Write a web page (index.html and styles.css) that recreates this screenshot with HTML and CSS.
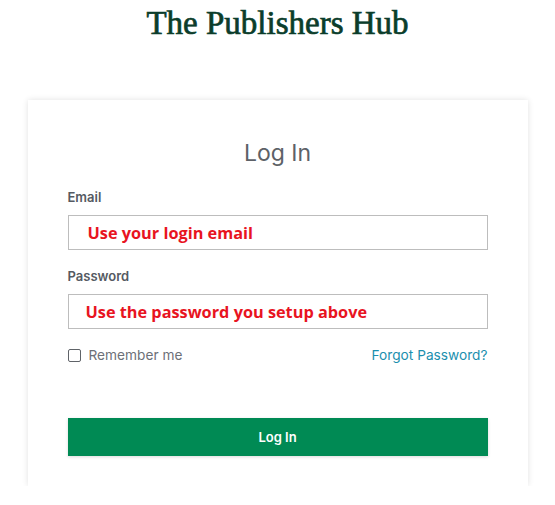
FILE: index.html
```html
<!DOCTYPE html>
<html lang="en">
<head>
<meta charset="utf-8">
<title>The Publishers Hub - Log In</title>
<link rel="stylesheet" href="styles.css">
</head>
<body>
<header class="brand">The Publishers Hub</header>
<main class="card">
  <h2 class="card-title">Log In</h2>
  <form class="form">
    <div class="field">
      <label class="label">Email</label>
      <div class="input"><span class="hint hint-email">Use your login email</span></div>
    </div>
    <div class="field">
      <label class="label">Password</label>
      <div class="input"><span class="hint hint-pass">Use the password you setup above</span></div>
    </div>
    <div class="options">
      <label class="remember"><span class="checkbox"></span>Remember me</label>
      <a class="forgot" href="#">Forgot Password?</a>
    </div>
    <button type="button" class="btn">Log In</button>
  </form>
</main>
</body>
</html>
```
FILE: styles.css
```css
html, body {
  margin: 0;
  padding: 0;
  background: #ffffff;
}
body {
  font-family: Inter, "Noto Sans", sans-serif;
  width: 555px;
}
.brand {
  font-family: "Liberation Serif", "Times New Roman", serif;
  font-size: 33px;
  color: #0b3d2b;
  text-align: center;
  line-height: 38px;
  padding-top: 4px;
  -webkit-text-stroke: 0.7px #0b3d2b;
}
.card {
  width: 500px;
  box-sizing: border-box;
  margin: 58px auto 0;
  padding: 38px 40px 30px;
  background: #fff;
  box-shadow: 0 0 6px rgba(0, 0, 0, 0.12);
}
.card-title {
  margin: 0 0 20px;
  text-align: center;
  font-weight: 400;
  font-size: 23px;
  line-height: 30px;
  color: #5d6167;
}
.field {
  display: flex;
  flex-direction: column;
  margin-bottom: 17px;
}
.label {
  font-size: 13px;
  font-weight: 600;
  color: #555a62;
  line-height: 18px;
  margin-bottom: 9px;
}
.input {
  height: 35px;
  box-sizing: border-box;
  border: 1px solid #bdbdbd;
  display: flex;
  align-items: center;
}
.hint {
  font-family: "Open Sans", "Noto Sans", sans-serif;
  font-weight: 700;
  color: #e8141f;
  font-size: 16.3px;
}
.hint-email { padding-left: 19px; }
.hint-pass { padding-left: 17px; }
.options {
  display: flex;
  justify-content: space-between;
  align-items: center;
  margin-top: 0;
  font-size: 13.7px;
  line-height: 18px;
}
.remember {
  display: flex;
  align-items: center;
  color: #6c7077;
}
.checkbox {
  width: 11px;
  height: 11px;
  border: 1px solid #5f6368;
  border-radius: 2px;
  margin-right: 8px;
}
.forgot {
  color: #1b8fae;
  text-decoration: none;
}
.btn {
  display: block;
  width: 100%;
  height: 38px;
  margin-top: 54px;
  border: 0;
  background: #008a54;
  color: #fff;
  font-family: Inter, "Noto Sans", sans-serif;
  font-weight: 600;
  font-size: 13px;
  box-shadow: 0 1px 3px rgba(0, 0, 0, 0.15);
}
```
